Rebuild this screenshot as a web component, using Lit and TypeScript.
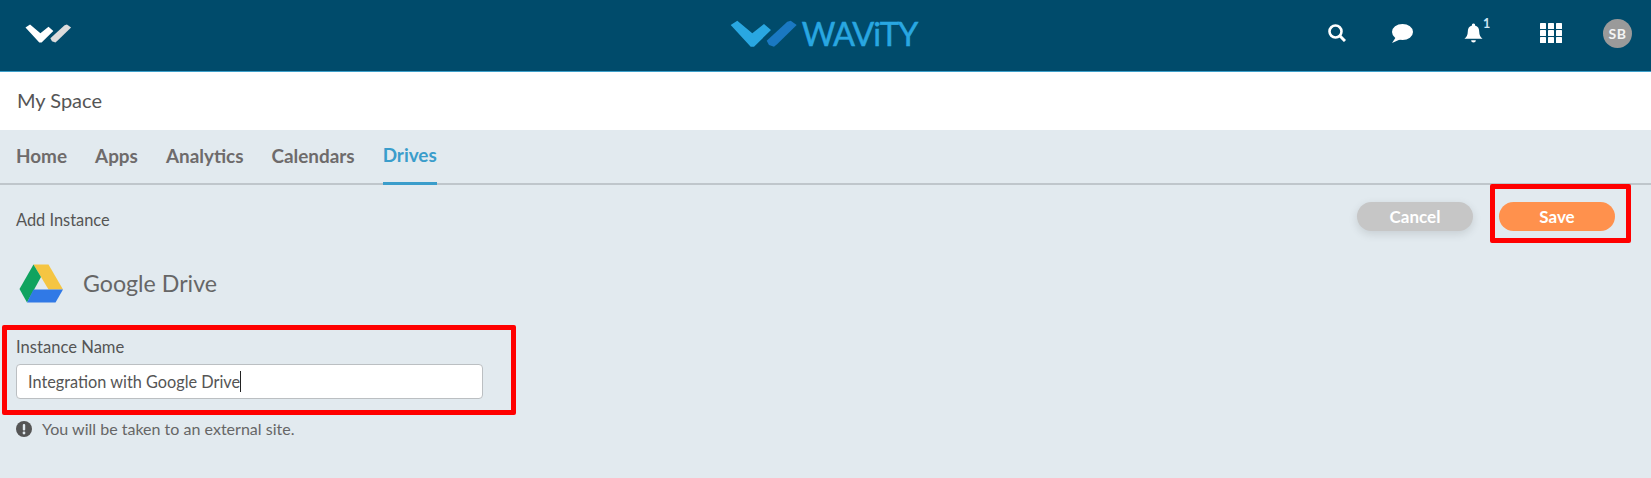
import { LitElement, html, css, svg } from "lit";
import { customElement } from "lit/decorators.js";

const mark = (a: string, b: string) => svg`
  <path d="M0.7 5 L7.3 0.7 L22.3 13.3 L34 4 L41 10 L24 26.7 L20.7 26.7 Z" fill="${a}"/>
  <path d="M36.7 20.7 L57.3 1.7 L60.7 0.7 L66.7 5 L47.3 24 L44 26.7 L39 25 Z" fill="${b}"/>`;

@customElement("app-root")
export class AppRoot extends LitElement {
  static styles = css`
    :host { display: block; width: 1651px; height: 478px; position: relative; overflow: hidden;
      background: #e2eaef; font-family: Lato, "Liberation Sans", sans-serif; color: #555; }
    .header { height: 71px; background: #004b6b; border-bottom: 1px solid #3c9fca; display: grid;
      grid-template-columns: 1fr auto 1fr; align-items: center; box-sizing: content-box; }
    .small-logo { margin: 0 0 4px 25px; width: 47px; height: 19.4px; display: block; }
    .brand { display: flex; align-items: center; gap: 4px; margin: 0 4px 3px 0; }
    .brand svg { width: 68px; height: 28px; display: block; }
    .brand span { font-size: 32.5px; line-height: 40px; color: #29a7e1; letter-spacing: -1px; font-weight: 400; -webkit-text-stroke: 0.5px #29a7e1; }
    .icons { display: flex; justify-content: flex-end; align-items: center; padding: 0 19px 5px 0; }
    .icons svg { display: block; }
    .i-search { margin-right: 45px; }
    .i-chat { margin-right: 51px; }
    .bell { position: relative; margin-right: 57px; height: 20px; }
    .bell sup { position: absolute; left: 19px; top: -6px; color: #cfe6f5; font-size: 12.5px; line-height: 13px; font-weight: 700; }
    .i-grid { margin-right: 41px; }
    .avatar { width: 29px; height: 29px; border-radius: 50%; background: #9a9a9a; color: #f4f4f4; font-size: 14px;
      font-weight: 700; letter-spacing: 0.6px; display: flex; align-items: center; justify-content: center; }
    .title { height: 58px; background: #fff; display: flex; align-items: center; padding: 0 0 2px 17px;
      font-size: 20px; color: #555; box-sizing: border-box; }
    .tabs { display: flex; gap: 28px; height: 53px; padding-left: 16px; border-bottom: 2px solid #bfc6cb; box-sizing: content-box; }
    .tab { font-size: 18.9px; font-weight: 700; color: #6e6b6b; line-height: 52px; height: 53px; box-sizing: border-box; }
    .tab.active { color: #3a9dcb; border-bottom: 3px solid #3a9dcb; line-height: 50px; margin-bottom: -2px; height: 55px; }
    .body { padding: 17px 16px 0; position: relative; }
    .top { display: flex; justify-content: space-between; align-items: flex-start; }
    .add { font-size: 16.4px; line-height: 20px; margin-top: 8px; color: #555; }
    .actions { display: flex; gap: 26px; padding-right: 20px; }
    button { width: 116px; height: 29px; border-radius: 15px; border: 0; color: #fff; font: 700 17px Lato, sans-serif; padding: 0; }
    .cancel { background: #c6c6c6; box-shadow: 0 3px 10px rgba(0,0,0,.12); }
    .save { background: #ff914d; }
    .drive { display: flex; align-items: center; gap: 20px; margin-top: 30px; margin-left: 3px; height: 44px; }
    .drive span { font-size: 23.2px; color: #666; }
    .label { font-size: 16.6px; line-height: 20px; margin-top: 32px; color: #555; }
    .input { width: 467px; height: 35px; box-sizing: border-box; margin-top: 7px; background: #fff; border: 1px solid #bbbfc2;
      border-radius: 4px; padding-left: 11px; font-size: 16.3px; line-height: 33px; color: #555; display: flex; align-items: center; }
    .caret { width: 1px; height: 21px; background: #222; }
    .hint { display: flex; align-items: center; gap: 10px; margin-top: 20px; font-size: 16.05px; line-height: 20px; color: #666; }
    .hint svg { display: block; }
    .mark-box { position: absolute; border: 5px solid #ff0000; box-sizing: border-box; border-radius: 2px; pointer-events: none; }
    .mark-a { left: 2px; top: 325px; width: 514px; height: 90px; }
    .mark-b { left: 1490px; top: 184px; width: 141px; height: 59px; }
  `;

  render() {
    return html`
      <div class="header">
        <svg class="small-logo" viewBox="0 0 68 28">${mark("#ffffff", "#dcdcdc")}</svg>
        <div class="brand">
          <svg viewBox="0 0 68 28">${mark("#29a7e1", "#1a78c2")}</svg>
          <span>WAViTY</span>
        </div>
        <div class="icons">
          <svg class="i-search" width="18" height="18" viewBox="0 0 18 18" fill="none" stroke="#fff"><circle cx="7.5" cy="7.5" r="6" stroke-width="2.6"/><path d="M12 12 L17 17" stroke-width="3"/></svg>
          <svg class="i-chat" width="22" height="19" viewBox="0 0 22 19" fill="#fff"><ellipse cx="11.5" cy="8" rx="10.5" ry="8"/><path d="M5 13 L1 19 L10 15 Z"/></svg>
          <div class="bell">
            <svg width="19" height="20" viewBox="0 0 20 21" fill="#fff"><path d="M10 0.5 a1.6 1.6 0 0 1 1.6 2 C15 3.5 16 6 16 9 C16 13 17.5 15 19.5 16.5 L0.5 16.5 C2.5 15 4 13 4 9 C4 6 5 3.5 8.4 2.5 A1.6 1.6 0 0 1 10 0.5 Z"/><path d="M7.5 18 h5 a2.5 2.5 0 0 1 -5 0 Z"/></svg>
            <sup>1</sup>
          </div>
          <svg class="i-grid" width="22" height="20" viewBox="0 0 22 20" fill="#fff">
            ${[0, 7, 14].map((y) => [0, 8, 16].map((x) => svg`<rect x="${x}" y="${y}" width="6" height="6" rx="0.5"/>`))}
          </svg>
          <div class="avatar">SB</div>
        </div>
      </div>
      <div class="title">My Space</div>
      <div class="tabs">
        <div class="tab">Home</div><div class="tab">Apps</div><div class="tab">Analytics</div><div class="tab">Calendars</div><div class="tab active">Drives</div>
      </div>
      <div class="body">
        <div class="top">
          <div class="add">Add Instance</div>
          <div class="actions"><button class="cancel">Cancel</button><button class="save">Save</button></div>
        </div>
        <div class="drive">
          <svg width="44" height="39" viewBox="0 0 44 39">
            <path d="M14.5 0.5 L29.5 0.5 L44 25.5 L29.5 25.5 Z" fill="#f5c542"/>
            <path d="M14.5 0.5 L22 13 L8 38.5 L0.5 25 Z" fill="#10a35f"/>
            <path d="M14.5 25.5 L44 25.5 L36.5 38.5 L8 38.5 Z" fill="#3079e6"/>
          </svg>
          <span>Google Drive</span>
        </div>
        <div class="label">Instance Name</div>
        <div class="input">Integration with Google Drive<span class="caret"></span></div>
        <div class="hint">
          <svg width="16" height="16" viewBox="0 0 16 16"><circle cx="8" cy="8" r="8" fill="#555"/><rect x="6.8" y="3" width="2.4" height="6.5" rx="1" fill="#e2eaef"/><circle cx="8" cy="12" r="1.4" fill="#e2eaef"/></svg>
          <span>You will be taken to an external site.</span>
        </div>
      </div>
      <div class="mark-box mark-a"></div>
      <div class="mark-box mark-b"></div>
    `;
  }
}
